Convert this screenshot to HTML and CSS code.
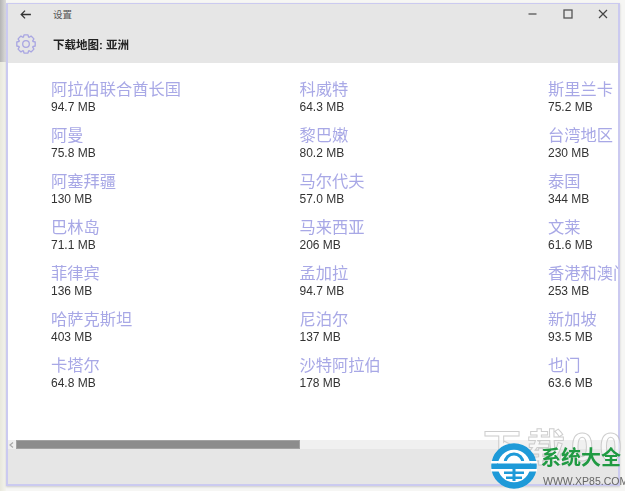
FILE: index.html
```html
<!DOCTYPE html>
<html lang="zh">
<head>
<meta charset="utf-8">
<title>设置</title>
<link rel="stylesheet" href="styles.css">
</head>
<body>
<div class="window">
  <header class="chrome">
    <div class="titlebar">
      <svg class="back" viewBox="0 0 12 10" width="11" height="9"><path d="M5.500.7 1.200 5l4.300 4.300M1.200 5H12" fill="none" stroke="#333" stroke-width="1.400"/></svg>
      <span class="apptitle">设置</span>
      <div class="controls">
        <svg viewBox="0 0 10 10" width="10" height="10"><path d="M.5 5h8" stroke="#555" stroke-width="1.300"/></svg>
        <svg viewBox="0 0 10 10" width="10" height="10"><rect x="1" y="1" width="8" height="8" fill="none" stroke="#555" stroke-width="1.300"/></svg>
        <svg viewBox="0 0 10 10" width="10" height="10"><path d="M1 1l8 8M9 1l-8 8" stroke="#444" stroke-width="1.200"/></svg>
      </div>
    </div>
    <div class="pagehead">
      <svg class="gear" viewBox="0 0 20 20" width="20" height="20">
        <g fill="none" stroke="#a9a6e2" stroke-width="1.300" stroke-linejoin="round">
          <path id="tooth" d="M7.320 3.530 8 .8h4l.68 2.730"/>
          <use href="#tooth" transform="rotate(45 10 10)"/>
          <use href="#tooth" transform="rotate(90 10 10)"/>
          <use href="#tooth" transform="rotate(135 10 10)"/>
          <use href="#tooth" transform="rotate(180 10 10)"/>
          <use href="#tooth" transform="rotate(225 10 10)"/>
          <use href="#tooth" transform="rotate(270 10 10)"/>
          <use href="#tooth" transform="rotate(315 10 10)"/>
          <circle cx="10" cy="10" r="3.300"/>
        </g>
      </svg>
      <h1 class="pagetitle">下载地图: 亚洲</h1>
    </div>
  </header>
  <main class="content">
    <div class="list">
      <div class="item"><span class="name">阿拉伯联合酋长国</span><span class="size">94.7 MB</span></div>
      <div class="item"><span class="name">阿曼</span><span class="size">75.8 MB</span></div>
      <div class="item"><span class="name">阿塞拜疆</span><span class="size">130 MB</span></div>
      <div class="item"><span class="name">巴林岛</span><span class="size">71.1 MB</span></div>
      <div class="item"><span class="name">菲律宾</span><span class="size">136 MB</span></div>
      <div class="item"><span class="name">哈萨克斯坦</span><span class="size">403 MB</span></div>
      <div class="item"><span class="name">卡塔尔</span><span class="size">64.8 MB</span></div>
      <div class="item"><span class="name">科威特</span><span class="size">64.3 MB</span></div>
      <div class="item"><span class="name">黎巴嫩</span><span class="size">80.2 MB</span></div>
      <div class="item"><span class="name">马尔代夫</span><span class="size">57.0 MB</span></div>
      <div class="item"><span class="name">马来西亚</span><span class="size">206 MB</span></div>
      <div class="item"><span class="name">孟加拉</span><span class="size">94.7 MB</span></div>
      <div class="item"><span class="name">尼泊尔</span><span class="size">137 MB</span></div>
      <div class="item"><span class="name">沙特阿拉伯</span><span class="size">178 MB</span></div>
      <div class="item"><span class="name">斯里兰卡</span><span class="size">75.2 MB</span></div>
      <div class="item"><span class="name">台湾地区</span><span class="size">230 MB</span></div>
      <div class="item"><span class="name">泰国</span><span class="size">344 MB</span></div>
      <div class="item"><span class="name">文莱</span><span class="size">61.6 MB</span></div>
      <div class="item"><span class="name">香港和澳门</span><span class="size">253 MB</span></div>
      <div class="item"><span class="name">新加坡</span><span class="size">93.5 MB</span></div>
      <div class="item"><span class="name">也门</span><span class="size">63.6 MB</span></div>
    </div>
    <div class="hscroll">
      <svg class="arrow" viewBox="0 0 5 6" width="5" height="6"><path d="M4 .5 1 3l3 2.500" fill="none" stroke="#aaa" stroke-width="1.200"/></svg>
      <div class="thumb"></div>
    </div>
  </main>
  <footer class="bottombar"></footer>
</div>
<div class="watermark">
  <span class="wm-big">下载00</span>
  <svg class="wm-logo" viewBox="0 0 46 46" width="46" height="46">
    <circle cx="23" cy="23" r="19.500" fill="#fff" stroke="#1e9ad8" stroke-width="6.500"/>
    <path d="M14 20a9 9 0 0 1 18 0" fill="none" stroke="#1e9ad8" stroke-width="3"/>
    <rect x="0" y="18" width="46" height="2.500" fill="#fff"/>
    <rect x="0" y="26" width="46" height="2.500" fill="#fff"/>
    <rect x="6" y="20.500" width="34" height="5.500" fill="#1e9ad8"/>
    <rect x="13" y="28.500" width="20" height="2.500" fill="#1e9ad8"/>
    <rect x="21.500" y="26" width="3" height="12" fill="#1e9ad8"/>
    <rect x="15" y="33.500" width="16" height="2.500" fill="#1e9ad8"/>
  </svg>
  <span class="wm-name">系统大全</span>
  <span class="wm-url">WWW.XP85.COM</span>
</div>
</body>
</html>
```
FILE: styles.css
```css
* { box-sizing: border-box; }
html, body { margin: 0; }
body {
  width: 625px;
  height: 491px;
  overflow: hidden;
  position: relative;
  padding: 3px 5px 5px 6px;
  font-family: "Liberation Sans", "Noto Sans CJK SC", sans-serif;
  background:
    linear-gradient(90deg, #b4b4b4, #dcdcdc) 0 0 / 6px 62px no-repeat,
    linear-gradient(90deg, #e8e8dc, #f4f4ee) 0 0 / 6px 100% no-repeat,
    #f6f6f4;
}
.window {
  width: 614px;
  height: 483px;
  display: flex;
  flex-direction: column;
  border: 2px solid #cbcaf0;
  border-top-width: 1px;
  background: #fff;
  filter: blur(.35px);
  box-shadow: 0 1px 2px #ccc;
}
.chrome { background: #e6e6e6; height: 59px; }
.titlebar {
  height: 20px;
  display: flex;
  align-items: center;
  padding-left: 12px;
}
.apptitle { margin-left: 22px; font-size: 9.500px; color: #555; }
.controls {
  margin-left: auto;
  display: flex;
  gap: 25px;
  padding-right: 10px;
}
.pagehead {
  height: 39px;
  display: flex;
  align-items: center;
  padding-left: 8px;
}
.gear { flex: none; }
.pagetitle {
  margin: 0 0 0 17px;
  font-size: 11.500px;
  font-weight: 700;
  color: #222;
}
.content {
  flex: 1;
  min-height: 0;
  display: flex;
  flex-direction: column;
  overflow: hidden;
}
.list {
  flex: 1;
  min-height: 0;
  padding: 16px 0 0 43px;
  display: grid;
  grid-auto-flow: column;
  grid-template-rows: repeat(7, 46px);
  grid-auto-columns: 248.500px;
  align-content: start;
}
.item { display: flex; flex-direction: column; white-space: nowrap; }
.name { font-size: 16.250px; line-height: 21px; color: #a8a8e6; }
.size { font-size: 12px; line-height: 14px; color: #333; }
.hscroll {
  flex: none;
  height: 9px;
  background: #f0f0f0;
  display: flex;
  align-items: center;
  padding-left: 1px;
}
.arrow { flex: none; margin-right: 2px; }
.thumb { width: 284px; height: 9px; background: #8c8c8c; border: 1px solid #a2a2a2; }
.bottombar { flex: none; height: 35px; background: #e6e6e6; }
.watermark { position: absolute; left: 483px; top: 428px; width: 142px; height: 63px; overflow: hidden; }
.wm-big {
  position: absolute;
  left: 0;
  top: -2px;
  font-family: "Noto Sans CJK SC", sans-serif;
  font-size: 38px;
  line-height: 38px;
  letter-spacing: 6px;
  font-weight: 700;
  white-space: nowrap;
  color: rgba(255,255,255,.5);
  -webkit-text-stroke: 1px rgba(190,190,190,.75);
}
.wm-logo { position: absolute; left: 8px; top: 15px; }
.wm-name {
  position: absolute;
  left: 58px;
  top: 16px;
  font-family: "Noto Sans CJK SC", sans-serif;
  font-size: 20px;
  line-height: 26px;
  font-weight: 700;
  white-space: nowrap;
  color: #1f9a42;
}
.wm-url {
  position: absolute;
  left: 60px;
  top: 47px;
  font-size: 10.500px;
  line-height: 12px;
  white-space: nowrap;
  color: #666;
}
```
